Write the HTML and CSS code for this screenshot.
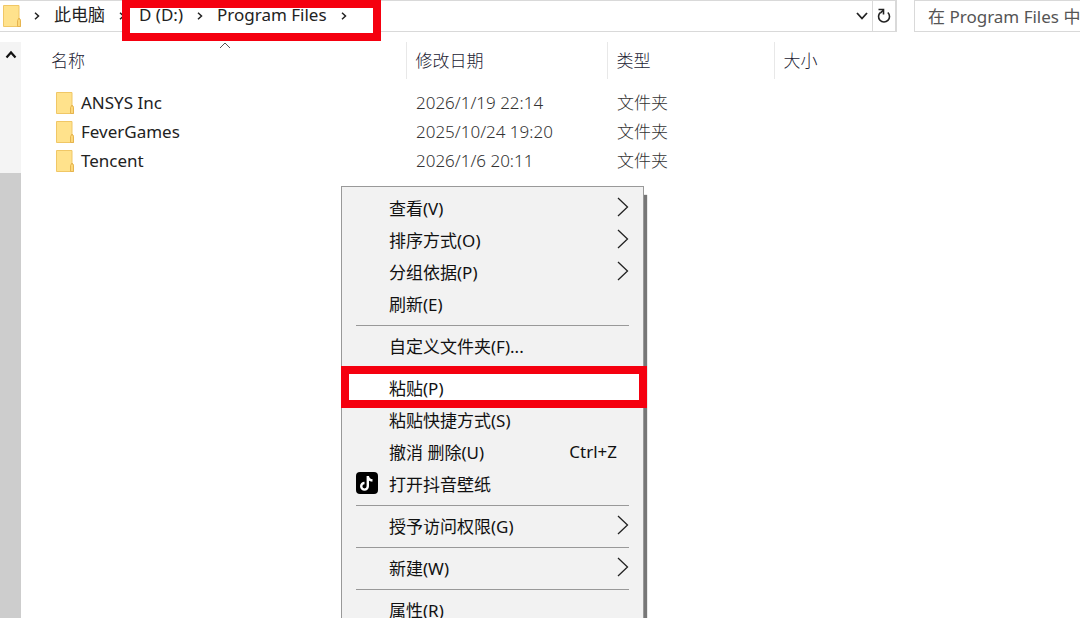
FILE: index.html
```
<!DOCTYPE html>
<html lang="zh-CN">
<head>
  <meta charset="utf-8">
  <title>Program Files</title>
  <link rel="stylesheet" href="styles.css">
</head>
<body>

  <svg class="symbols" aria-hidden="true">
    <symbol id="folder" viewBox="0 0 18 22">
      <path d="M.5.5h15.500v12.500l1.500 2v6.500H.5z" fill="#ffe28c" stroke="#f0c766"/>
      <path d="M14.500 21.500v-6l1.500-2.500 1.500 2.500v6z" fill="#fcd878" stroke="#e6b450"/>
    </symbol>
    <symbol id="crumb" viewBox="0 0 6 8">
      <path d="M1 .8L4.500 4 1 7.200" fill="none" stroke="#222" stroke-width="1.500"/>
    </symbol>
    <symbol id="more" viewBox="0 0 12 20">
      <path d="M1 1l9.500 9L1 19" fill="none" stroke="#222" stroke-width="1.300"/>
    </symbol>
  </svg>

  <header class="toolbar">
    <nav class="address" aria-label="路径">
      <svg class="folder-icon"><use href="#folder"/></svg>
      <svg class="crumb-arrow"><use href="#crumb"/></svg>
      <a class="crumb" href="#">此电脑</a>
      <svg class="crumb-arrow"><use href="#crumb"/></svg>
      <span class="marked-path">
        <a class="crumb" href="#">D (D:)</a>
        <svg class="crumb-arrow"><use href="#crumb"/></svg>
        <a class="crumb" href="#">Program Files</a>
        <svg class="crumb-arrow"><use href="#crumb"/></svg>
      </span>
      <button class="history" type="button" aria-label="历史记录">
        <svg width="12" height="8" viewBox="0 0 12 8"><path d="M1 1l5 5.500L11 1" fill="none" stroke="#222" stroke-width="1.800"/></svg>
      </button>
      <button class="refresh" type="button" aria-label="刷新">
        <svg width="14" height="16" viewBox="0 0 14 16" fill="none" stroke="#222" stroke-width="1.600">
          <path d="M3.500 4.300A5.500 5.500 0 1 0 10.800 4.500"/>
          <path d="M1.500 1.500h5v5"/>
          <path d="M6.500 2L3.500 4.800"/>
        </svg>
      </button>
    </nav>
    <input class="search" type="text" placeholder="在 Program Files 中" aria-label="搜索">
  </header>

  <main class="explorer">
    <div class="scrollbar">
      <button class="scroll-up" type="button" aria-label="向上滚动">
        <svg width="12" height="9" viewBox="0 0 12 9"><path d="M1.500 7.500L6 2.500l4.500 5" fill="none" stroke="#111" stroke-width="2.200"/></svg>
      </button>
      <div class="scroll-thumb"></div>
    </div>

    <table class="files">
      <colgroup>
        <col class="col-name">
        <col class="col-date">
        <col class="col-type">
        <col>
      </colgroup>
      <thead>
        <tr>
          <th>
            <svg class="sort-mark" width="12" height="7" viewBox="0 0 12 7"><path d="M1 6l5-5 5 5" fill="none" stroke="#555"/></svg>
            名称
          </th>
          <th>修改日期</th>
          <th>类型</th>
          <th>大小</th>
        </tr>
      </thead>
      <tbody>
        <tr>
          <td><span class="file-name"><svg class="folder-icon"><use href="#folder"/></svg>ANSYS Inc</span></td>
          <td>2026/1/19 22:14</td>
          <td>文件夹</td>
          <td></td>
        </tr>
        <tr>
          <td><span class="file-name"><svg class="folder-icon"><use href="#folder"/></svg>FeverGames</span></td>
          <td>2025/10/24 19:20</td>
          <td>文件夹</td>
          <td></td>
        </tr>
        <tr>
          <td><span class="file-name"><svg class="folder-icon"><use href="#folder"/></svg>Tencent</span></td>
          <td>2026/1/6 20:11</td>
          <td>文件夹</td>
          <td></td>
        </tr>
      </tbody>
    </table>
  </main>

  <div class="context-menu">
    <button class="item" type="button">查看(V)<svg class="more"><use href="#more"/></svg></button>
    <button class="item" type="button">排序方式(O)<svg class="more"><use href="#more"/></svg></button>
    <button class="item" type="button">分组依据(P)<svg class="more"><use href="#more"/></svg></button>
    <button class="item" type="button">刷新(E)</button>
    <hr>
    <button class="item" type="button">自定义文件夹(F)...</button>
    <hr>
    <button class="item marked" type="button">粘贴(P)</button>
    <button class="item" type="button">粘贴快捷方式(S)</button>
    <button class="item" type="button">撤消 删除(U)<span class="shortcut">Ctrl+Z</span></button>
    <button class="item with-icon" type="button">
      <svg class="app-icon" viewBox="0 0 22 22">
        <rect width="22" height="22" rx="4"/>
        <path d="M11.800 4v10.300a3.300 3.300 0 1 1-3.300-3.300M11.800 4.200c.4 2.600 2 4 4.700 4.300" fill="none" stroke="#fff" stroke-width="2.400"/>
      </svg>
      打开抖音壁纸
    </button>
    <hr>
    <button class="item" type="button">授予访问权限(G)<svg class="more"><use href="#more"/></svg></button>
    <hr>
    <button class="item" type="button">新建(W)<svg class="more"><use href="#more"/></svg></button>
    <hr>
    <button class="item" type="button">属性(R)</button>
  </div>

</body>
</html>
```
FILE: styles.css
```
* {
  box-sizing: border-box;
}

body {
  margin: 0;
  height: 100vh;
  display: flex;
  flex-direction: column;
  overflow: hidden;
  background: #fff;
  color: #222;
  font-family: "Noto Sans", "Noto Sans CJK SC", sans-serif;
  font-size: 17px;
}

button,
input {
  margin: 0;
  padding: 0;
  border: 0;
  background: none;
  color: inherit;
  font: inherit;
}

a {
  color: inherit;
  text-decoration: none;
}

.symbols {
  display: none;
}

.folder-icon {
  flex: none;
  width: 18px;
  height: 22px;
}

/* Address bar and search */
.toolbar {
  display: flex;
  gap: 17px;
  height: 32px;
}

.address {
  flex: 1;
  display: flex;
  align-items: center;
  border: 1px solid #d9d9d9;
  border-left: 0;
}

.address > .folder-icon {
  margin: 0 13px 0 3px;
}

.crumb-arrow {
  flex: none;
  width: 6px;
  height: 8px;
}

.crumb {
  margin: 0 14px;
  padding-bottom: 2px;
  line-height: 24px;
  white-space: nowrap;
}

.marked-path {
  position: relative;
  isolation: isolate;
  display: flex;
  align-items: center;
}

/* Red frame round the path */
.marked-path::before {
  content: "";
  position: absolute;
  z-index: -1;
  inset: -3px -34px -12px -3px;
  border: 8px solid #f5000f;
  background: #fff;
}

.history {
  display: flex;
  align-items: center;
  margin-left: auto;
  padding: 0 4px;
}

.refresh {
  display: grid;
  place-items: center;
  align-self: stretch;
  width: 24px;
  border: solid #d9d9d9;
  border-width: 0 1px;
}

.search {
  width: 166px;
  padding-left: 13px;
  border: 1px solid #d9d9d9;
  border-right: 0;
}

.search::placeholder {
  color: #555;
  opacity: 1;
}

/* File list */
.explorer {
  flex: 1;
  display: flex;
  padding-top: 10px;
}

.scrollbar {
  flex: none;
  display: flex;
  flex-direction: column;
  width: 21px;
  background: #f4f4f4;
}

.scroll-up {
  display: grid;
  place-items: center;
  height: 24px;
  margin-bottom: 107px;
}

.scroll-thumb {
  flex: 1;
  background: #cdcdcd;
}

.files {
  flex: 1;
  align-self: flex-start;
  table-layout: fixed;
  border-collapse: collapse;
  color: #333;
  font-weight: 300;
}

.col-name {
  width: 385px;
}

.col-date {
  width: 201px;
}

.col-type {
  width: 167px;
}

.files th {
  position: relative;
  height: 37px;
  padding: 0 0 2px 9px;
  border-left: 1px solid #e8e8e8;
  color: #223;
  font-weight: inherit;
  text-align: left;
}

.files th:first-child {
  padding-left: 30px;
  border-left: 0;
}

.sort-mark {
  position: absolute;
  top: 0;
  left: 198px;
}

.files tbody::before {
  content: "";
  display: block;
  height: 9px;
}

.files td {
  height: 29px;
  padding: 0 0 0 10px;
  line-height: 28px;
}

.files td:first-child {
  padding-left: 35px;
}

.file-name {
  display: flex;
  align-items: center;
  gap: 7px;
  color: #222;
  font-weight: 400;
}

/* Context menu */
.context-menu {
  position: absolute;
  top: 186px;
  left: 341px;
  width: 303px;
  padding: 5px 0;
  border: 1px solid #999;
  background: #f2f2f2;
  box-shadow: 3px 9px 1px #777;
}

.item {
  position: relative;
  display: flex;
  align-items: center;
  width: 100%;
  height: 32px;
  padding: 0 14px 2px 47px;
  color: #111;
  text-align: left;
}

.with-icon {
  gap: 11px;
  padding-left: 14px;
}

.app-icon {
  width: 22px;
  height: 22px;
}

.more {
  width: 12px;
  height: 20px;
  margin-left: auto;
}

.shortcut {
  margin: 0 12px 0 auto;
}

.context-menu hr {
  margin: 5px 14px 4px;
  border: 0;
  border-top: 1px solid #999;
}

.marked {
  isolation: isolate;
}

.marked::before {
  content: "";
  position: absolute;
  z-index: -1;
  inset: -6px -4px -4px -1px;
  border: 8px solid #f5000f;
  background: #fff;
}
```
